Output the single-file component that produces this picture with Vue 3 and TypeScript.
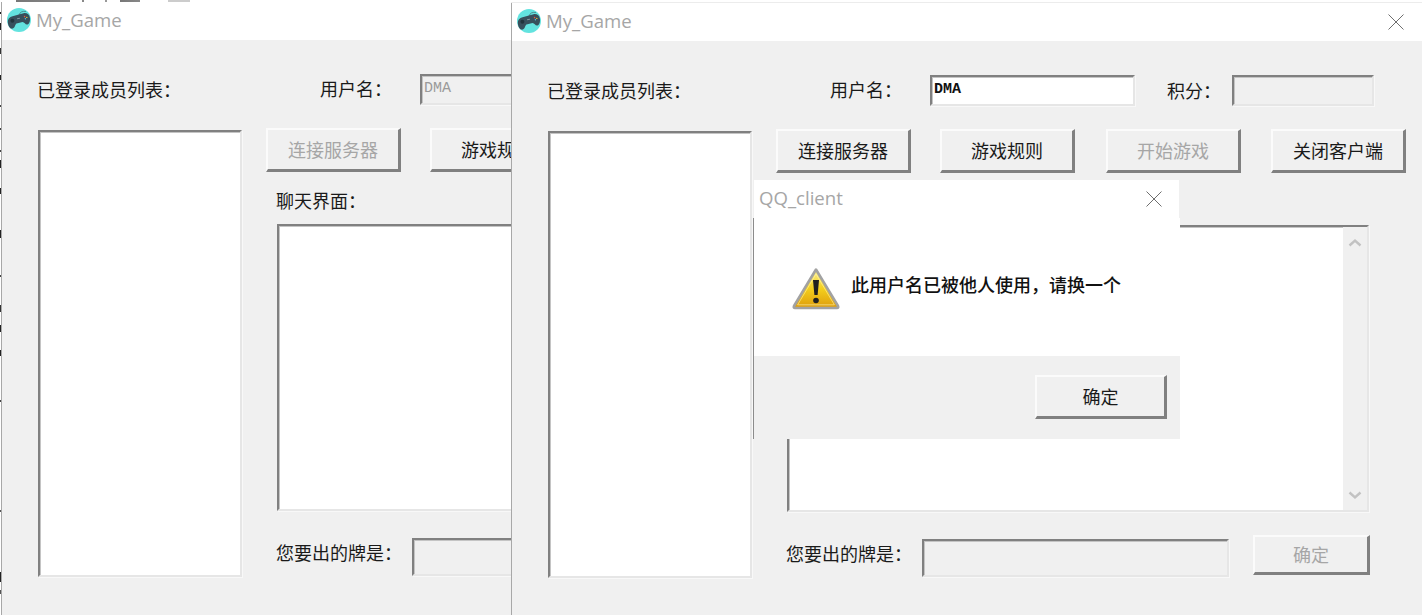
<script setup lang="ts">
interface GameWindow {
  id: string
  connectDisabled: boolean
  nameDisabled: boolean
  isFront: boolean
}
const windows: GameWindow[] = [
  { id: 'back', connectDisabled: true, nameDisabled: true, isFront: false },
  { id: 'front', connectDisabled: false, nameDisabled: false, isFront: true },
]
</script>

<template>
  <div class="desktop">
    <section v-for="win in windows" :key="win.id" class="window" :class="win.id">
      <header class="titlebar">
        <svg class="app-icon" viewBox="0 0 24 24" width="24" height="24">
          <circle cx="12" cy="12" r="12" fill="#63e3df" />
          <path d="M12 7 Q13.5 2.5 19 3.5" fill="none" stroke="#3b5560" stroke-width="0.6" />
          <path d="M0.8 14 C0.6 11 2.6 9 5.5 8.2 L16.5 5.2 C19.8 4.6 22.6 6.6 23 10 C23.3 13.5 22 16.6 20 16.6 C18.2 16.6 17.4 14.2 15.5 14 L9.5 15.6 C8.2 16.2 8.2 19.6 5.8 20.6 C3.2 21.4 1 18 0.8 14 Z" fill="#37505c" />
          <circle cx="5.4" cy="12.8" r="2" fill="#22343c" />
          <circle cx="17.6" cy="8.6" r="0.8" fill="#e9573f" />
          <circle cx="19.8" cy="9.4" r="0.7" fill="#f5c13a" />
          <circle cx="18.4" cy="10.8" r="0.7" fill="#5bc0de" />
          <rect x="10" y="10" width="3" height="0.9" fill="#8fa3ab" transform="rotate(-14 11.5 10.5)" />
        </svg>
        <span class="title">My_Game</span>
        <svg v-if="win.isFront" class="close" viewBox="0 0 16 16" width="16" height="16">
          <path d="M0.5 0.5 L15.5 15.5 M15.5 0.5 L0.5 15.5" stroke="#6e6e6e" stroke-width="1" fill="none" />
        </svg>
      </header>

      <div class="body">
        <div class="top-row">
          <span class="label members-label">已登录成员列表：</span>
          <span class="label name-label">用户名：</span>
          <div class="sunken name-input" :class="{ disabled: win.nameDisabled }">DMA</div>
          <template v-if="win.isFront">
            <span class="label score-label">积分：</span>
            <div class="sunken score-input disabled"></div>
          </template>
        </div>

        <div class="main-row">
          <div class="sunken member-list"></div>
          <div class="main-col">
            <div class="buttons">
              <button class="raised big" :disabled="win.connectDisabled">连接服务器</button>
              <button class="raised big">游戏规则</button>
              <template v-if="win.isFront">
                <button class="raised big" disabled>开始游戏</button>
                <button class="raised big">关闭客户端</button>
              </template>
            </div>
            <div class="label chat-label">{{ win.isFront ? '\u00a0' : '聊天界面：' }}</div>
            <div class="sunken chat-box">
              <div class="scrollbar">
                <svg viewBox="0 0 14 9" width="14" height="9"><path d="M1.5 7.5 L7 2.5 L12.5 7.5" fill="none" stroke="#c2c2c2" stroke-width="2.4" /></svg>
                <svg viewBox="0 0 14 9" width="14" height="9"><path d="M1.5 1.5 L7 6.5 L12.5 1.5" fill="none" stroke="#c2c2c2" stroke-width="2.4" /></svg>
              </div>
            </div>
            <div class="play-row">
              <span class="label play-label">您要出的牌是：</span>
              <div class="sunken play-input disabled"></div>
              <button v-if="win.isFront" class="raised play-btn" disabled>确定</button>
            </div>
          </div>
        </div>
      </div>
    </section>

    <section class="dialog">
      <header class="dialog-title">
        <span class="title">QQ_client</span>
        <svg viewBox="0 0 16 16" width="16" height="16">
          <path d="M0.5 0.5 L15.5 15.5 M15.5 0.5 L0.5 15.5" stroke="#6e6e6e" stroke-width="1" fill="none" />
        </svg>
      </header>
      <div class="dialog-body">
        <svg class="warn" viewBox="0 0 48 43" width="48" height="43">
          <defs>
            <linearGradient id="warnFill" x1="0" y1="0" x2="0" y2="1">
              <stop offset="0" stop-color="#fbf08e" />
              <stop offset="0.5" stop-color="#f4cf1c" />
              <stop offset="1" stop-color="#dd9c0c" />
            </linearGradient>
          </defs>
          <path d="M24 2.5 L46 39 Q46.8 41 45 41 L3 41 Q1.2 41 2 39 Z" fill="url(#warnFill)" stroke="#a2a2a2" stroke-width="2.6" stroke-linejoin="round" />
          <path d="M24 7 L42.4 37.8 L5.6 37.8 Z" fill="none" stroke="#fff6b8" stroke-width="0.8" opacity="0.7" />
          <path d="M21 13 L27 13 L25.6 28 L22.4 28 Z" fill="#202020" />
          <circle cx="24" cy="33.5" r="2.8" fill="#202020" />
        </svg>
        <span class="message">此用户名已被他人使用，请换一个</span>
      </div>
      <footer class="dialog-foot">
        <button class="raised ok-btn">确定</button>
      </footer>
    </section>
  </div>
</template>

<style>
html, body { margin: 0; overflow: hidden; background: #fff; }
</style>

<style scoped>
.desktop {
  position: relative;
  width: 1422px;
  height: 615px;
  overflow: hidden;
  background-color: #fff;
  background-image:
    linear-gradient(90deg, #fff 16px, #777 16px, #888 70px, #fff 70px, #fff 82px, #888 82px, #888 84px, #fff 84px, #fff 105px, #999 105px, #999 107px, #fff 107px, #fff 120px, #777 120px, #888 140px, #fff 140px, #fff 168px, #ccc 168px, #ccc 190px, #fff 190px),
    linear-gradient(180deg, #fff 12px, #222 12px, #222 14px, #fff 14px, #fff 23px, #222 23px, #222 30px, #fff 30px, #fff 48px, #333 48px, #333 54px, #fff 54px, #fff 75px, #222 75px, #222 80px, #fff 80px, #fff 105px, #444 105px, #444 107px, #fff 107px, #fff 128px, #444 128px, #444 130px, #fff 130px, #fff 150px, #444 150px, #444 152px, #fff 152px, #fff 160px, #222 160px, #222 168px, #fff 168px, #fff 188px, #222 188px, #222 194px, #fff 194px, #fff 230px, #222 230px, #222 238px, #fff 238px, #fff 275px, #444 275px, #444 277px, #fff 277px, #fff 305px, #333 305px, #333 312px, #fff 312px, #fff 325px, #222 325px, #222 332px, #fff 332px, #fff 350px, #222 350px, #222 356px, #fff 356px, #fff 400px, #444 400px, #444 402px, #fff 402px, #fff 510px, #555 510px, #555 512px, #fff 512px, #fff 572px, #222 572px, #222 582px, #fff 582px, #fff 590px, #555 590px, #555 594px, #fff 594px);
  background-size: 240px 2px, 1px 615px;
  background-repeat: no-repeat;
  font-family: "Noto Sans CJK SC", "Liberation Sans", sans-serif;
  color: #1a1a1a;
}
.window {
  position: absolute;
  height: 613px;
  box-sizing: border-box;
  border-left: 1px solid #a8a8a8;
  background: #f0f0f0;
  display: flex;
  flex-direction: column;
  overflow: hidden;
}
.back { left: 1px; top: 2px; width: 510px; }
.front { left: 511px; top: 3px; width: 911px; box-shadow: 0 -1px #ececec; }
.titlebar {
  height: 38px;
  flex: none;
  background: #fff;
  display: flex;
  align-items: center;
  padding-left: 5px;
  padding-right: 18px;
}
.app-icon { flex: none; margin: 0 5px 2px 0; }
.title {
  font-family: "Open Sans", "Liberation Sans", sans-serif;
  font-size: 18.6px;
  line-height: 24px;
  color: #a6a6a6;
  padding-bottom: 2px;
}
.close { margin-left: auto; }
.body { padding: 34px 0 0 36px; }
.label { font-size: 18px; line-height: 24px; white-space: nowrap; flex: none; }
.top-row { display: flex; align-items: center; height: 31px; }
.members-label { width: 282px; padding-bottom: 2px; margin-left: -1px; margin-right: 1px; }
.name-label { width: 100px; padding-bottom: 4px; }
.score-label { width: 65px; margin-left: 32px; padding-bottom: 2px; }
.sunken {
  box-sizing: border-box;
  background: #fff;
  border-style: solid;
  border-width: 2px;
  border-color: #808080 #e6e6e6 #e6e6e6 #808080;
  box-shadow: inset 1px 1px #c4c4c4, 1px 1px #f8f8f8;
  flex: none;
}
.sunken.disabled { background: #f0f0f0; }
.name-input {
  width: 205px;
  height: 31px;
  padding-left: 2px;
  font-family: "Liberation Mono", monospace;
  font-weight: 700;
  font-size: 15px;
  line-height: 26px;
  color: #111;
}
.name-input.disabled { color: #9a9a9a; font-weight: 400; background: #f0f0f0; }
.score-input { width: 142px; height: 31px; }
.main-row { display: flex; margin-top: 23px; }
.member-list { width: 204px; height: 447px; margin-top: 2px; }
.main-col { margin-left: 24px; width: 631px; flex: none; }
.buttons { display: flex; }
.buttons .big:nth-child(1) { margin-right: 29px; }
.buttons .big:nth-child(2) { margin-right: 31px; }
.buttons .big:nth-child(3) { margin-right: 30px; }
.raised {
  box-sizing: border-box;
  padding: 0 0 2px;
  background: #f0f0f0;
  font: inherit;
  font-size: 18px;
  color: #1a1a1a;
  border-style: solid;
  border-width: 2px 3px 3px 2px;
  border-color: #fbfbfb #808080 #808080 #fbfbfb;
  border-radius: 0;
  flex: none;
}
.raised:disabled { color: #a6a6a6; }
.big { width: 135px; height: 44px; }
.chat-label { margin: 16px 0 12px 10px; }
.chat-box {
  position: relative;
  margin-left: 11px;
  width: 582px;
  height: 287px;
}
.scrollbar {
  position: absolute;
  top: 0;
  right: 0;
  bottom: 0;
  width: 24px;
  background: #f0f0f0;
  display: flex;
  flex-direction: column;
  align-items: center;
  justify-content: space-between;
  padding: 11px 0 10px;
  box-sizing: border-box;
}
.play-row { display: flex; align-items: flex-start; margin: 23px 0 0 10px; }
.play-label { width: 136px; margin-top: 6px; }
.play-input { width: 307px; height: 38px; margin-top: 4px; }
.play-btn { width: 117px; height: 40px; margin-left: 24px; }
.dialog {
  position: absolute;
  left: 754px;
  top: 180px;
  width: 426px;
  height: 259px;
  display: flex;
  flex-direction: column;
}
.dialog::before {
  content: "";
  position: absolute;
  left: -1px;
  top: 38px;
  bottom: 0;
  width: 1px;
  background: #8c8c8c;
}
.dialog-title {
  height: 38px;
  flex: none;
  box-sizing: border-box;
  width: 425px;
  background: #fff;
  display: flex;
  align-items: center;
  justify-content: space-between;
  padding: 0 17px 0 5px;
}
.dialog-body {
  height: 138px;
  flex: none;
  box-sizing: border-box;
  background: #fff;
  display: flex;
  align-items: flex-start;
  padding: 49px 0 0 38px;
}
.warn { flex: none; }
.message {
  margin-left: 11px;
  margin-top: 5px;
  font-size: 18px;
  line-height: 24px;
  font-weight: 500;
  color: #111;
  white-space: nowrap;
}
.dialog-foot {
  flex: 1;
  background: #f0f0f0;
  padding: 19px 13px 0 0;
  display: flex;
  justify-content: flex-end;
  align-items: flex-start;
}
.ok-btn { width: 132px; height: 44px; }
</style>
